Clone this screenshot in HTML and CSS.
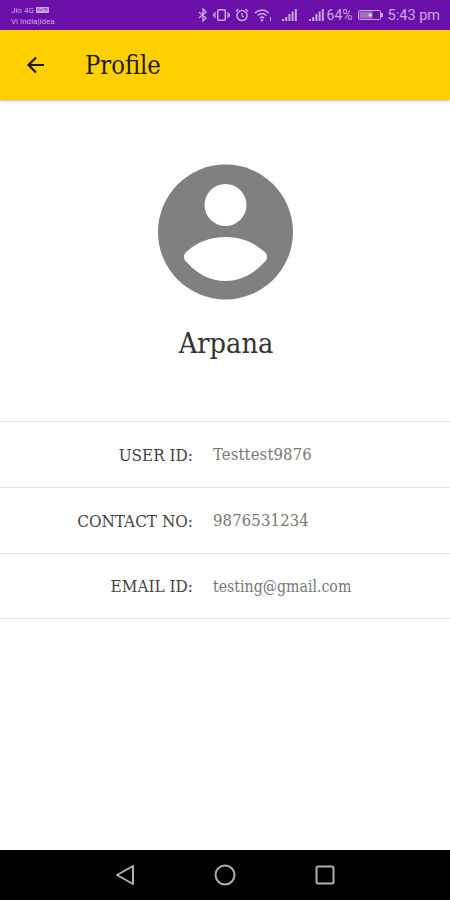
FILE: index.html
```html
<!DOCTYPE html>
<html lang="en">
<head>
<meta charset="utf-8">
<title>Profile</title>
<link rel="stylesheet" href="styles.css">
</head>
<body>
<div class="screen">
  <div class="status">
    <div class="carriers">
      <div class="carrier-top"><span>Jio 4G</span><span class="volte">VoLTE</span></div>
      <div>Vi India|Idea</div>
    </div>
    <div class="status-right">
      <svg class="si" width="10" height="14" viewBox="0 0 10 14"><path d="M1 4l7 6-3 3V1l3 3-7 6" fill="none" stroke="currentColor" stroke-width="1.4"/></svg>
      <svg class="si" width="17" height="14" viewBox="0 0 17 14"><rect x="4.7" y="1.7" width="7.6" height="10.6" rx="1.2" fill="none" stroke="currentColor" stroke-width="1.5"/><path d="M2 4v6M15 4v6M0.6 5.5v3M16.4 5.5v3" stroke="currentColor" stroke-width="1.2"/></svg>
      <svg class="si" width="14" height="14" viewBox="0 0 14 14"><circle cx="7" cy="7.6" r="5" fill="none" stroke="currentColor" stroke-width="1.5"/><path d="M7 5v3l2 1M1 3.5L3.5 1M13 3.5L10.5 1" fill="none" stroke="currentColor" stroke-width="1.2"/></svg>
      <svg class="si" width="18" height="14" viewBox="0 0 18 14"><path d="M1 5q7-6 14 0M3.5 7.5q4.5-4 9 0M6 10q2-1.8 4 0" fill="none" stroke="currentColor" stroke-width="1.5"/><circle cx="8" cy="12.3" r="1.2" fill="currentColor"/><path d="M16.5 9v4" stroke="currentColor" stroke-width="1"/></svg>
      <svg class="si bars-a" width="15" height="14" viewBox="0 0 15 14"><path d="M1 13v-2M4.2 13V9M7.4 13V6M10.6 13V3.5M13.8 13V1" stroke="currentColor" stroke-width="2"/></svg>
      <svg class="si bars-b" width="15" height="14" viewBox="0 0 15 14"><path d="M1 13v-2M4.2 13V9M7.4 13V6M10.6 13V3.5M13.8 13V1" stroke="currentColor" stroke-width="2"/></svg>
      <span class="pct">64%</span>
      <svg class="si batt" width="26" height="12" viewBox="0 0 26 12"><rect x="0.5" y="1.5" width="22" height="9" rx="1" fill="none" stroke="currentColor"/><rect x="1.5" y="2.5" width="13" height="7" fill="currentColor" opacity=".6"/><rect x="23" y="4" width="2" height="4" fill="currentColor"/><path d="M13 3l-3 3.5h2.5L11 9l3.5-3.5H12z" fill="#fff"/></svg>
      <span class="clock">5:43 pm</span>
    </div>
  </div>

  <header class="appbar">
    <svg class="back" width="24" height="24" viewBox="0 0 24 24"><path d="M20 12H4.5M12 4.5L4.5 12l7.5 7.5" fill="none" stroke="#1d1a05" stroke-width="2.2"/></svg>
    <h1 class="title">Profile</h1>
  </header>

  <main class="content">
    <section class="hero">
      <svg class="avatar" width="137" height="136" viewBox="0 0 137 136">
        <circle cx="68.5" cy="68" r="67.5" fill="#808080"/>
        <circle cx="68.5" cy="41" r="21" fill="#fff"/>
        <path d="M27 93C27 90 28.500 88.500 30.500 87C40.500 78 53.500 73 68.500 73S96.500 78 106.500 87C108.500 88.500 110 90 110 93C110 96 108.500 97.500 106.500 99C96.500 110 83.500 117 68.500 117S40.500 110 30.500 99C28.500 97.500 27 96 27 93Z" fill="#fff"/>
      </svg>
      <div class="name">Arpana</div>
    </section>
    <div class="rows">
      <div class="row"><div class="label">USER ID:</div><div class="value">Testtest9876</div></div>
      <div class="row"><div class="label">CONTACT NO:</div><div class="value">9876531234</div></div>
      <div class="row"><div class="label">EMAIL ID:</div><div class="value email">testing@gmail.com</div></div>
    </div>
  </main>

  <nav class="navbar">
    <svg width="20" height="22" viewBox="0 0 20 22"><path d="M18 2L2 11l16 9Z" fill="none" stroke="#b0b0b0" stroke-width="2" stroke-linejoin="round"/></svg>
    <svg width="22" height="22" viewBox="0 0 22 22"><circle cx="11" cy="11" r="9.5" fill="none" stroke="#b0b0b0" stroke-width="2"/></svg>
    <svg width="20" height="20" viewBox="0 0 20 20"><rect x="1.5" y="1.5" width="17" height="17" rx="1.5" fill="none" stroke="#b0b0b0" stroke-width="2"/></svg>
  </nav>
</div>
</body>
</html>
```
FILE: styles.css
```css
* { box-sizing: border-box; }
html, body { margin: 0; padding: 0; }
body { background: #fff; font-family: "DejaVu Serif Condensed", "DejaVu Serif", serif; }
.screen { width: 450px; height: 900px; display: flex; flex-direction: column; overflow: hidden; }

.status {
  height: 30px; background: #6a10a8; color: #c9a8e2;
  display: flex; justify-content: space-between; align-items: center;
  padding: 0 10px 0 11px;
  font-family: Roboto, sans-serif;
}
.carriers { font-size: 8px; line-height: 11px; padding-top: 1px; }
.carrier-top { display: flex; align-items: center; gap: 2px; }
.volte { background: #c9a8e2; color: #6a10a8; font-size: 4px; line-height: 6px; padding: 0 1px; border-radius: 1px; }
.status-right { display: flex; align-items: center; }
.si { display: block; margin-right: 5px; }
.bars-a { margin-left: 5px; margin-right: 12px; }
.bars-b { margin-right: 3px; }
.pct { font-size: 14px; margin-right: 5px; }
.batt { margin-right: 4px; }
.clock { font-size: 14.5px; }

.appbar {
  height: 70px; background: #ffd000; display: flex; align-items: center;
  padding: 0 24px; gap: 37px;
  box-shadow: 0 1px 3px rgba(0,0,0,.25);
  position: relative;
}
.title { margin: 0; font-size: 25.3px; font-weight: 400; color: #1d1a05; }

.content { flex: 1; display: flex; flex-direction: column; }
.hero { display: flex; flex-direction: column; align-items: center; padding-top: 64px; height: 321px; }
.avatar { display: block; }
.name { margin-top: 25px; padding-left: 2px; font-size: 28.6px; line-height: 36px; color: #333; }

.rows { border-top: 1px solid #e2e2e2; }
.row {
  height: 65.8px; padding-top: 1px; border-bottom: 1px solid #e2e2e2;
  display: flex; align-items: center; gap: 20px;
}
.label { width: 193px; text-align: right; font-size: 17px; color: #444; }
.value { font-size: 16.5px; letter-spacing: .15px; color: #777; }
.email { font-size: 15.75px; letter-spacing: 0; }

.navbar {
  height: 50px; background: #000; display: flex; align-items: center;
  justify-content: space-between; padding: 0 115px;
}
```
